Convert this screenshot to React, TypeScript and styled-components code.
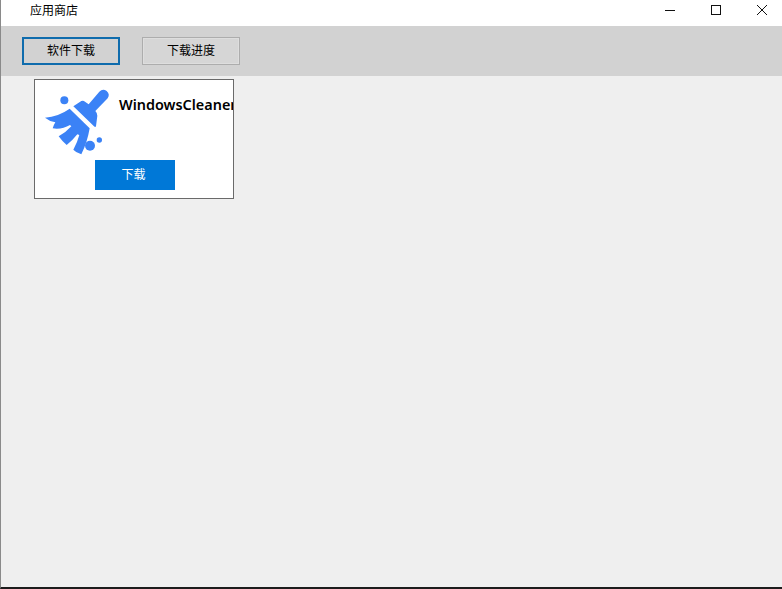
import React from "react";
import styled, { createGlobalStyle } from "styled-components";

const Global = createGlobalStyle`
  html, body { margin: 0; padding: 0; height: 100%; overflow: hidden; }
  #root { height: 100%; }
`;
const Win = styled.div`
  box-sizing: border-box; width: 782px; height: 589px; display: flex; flex-direction: column;
  background: #efefef; border-left: 1px solid #8a8a8a; border-bottom: 2px solid #1c1c1c;
  font-family: "Noto Sans CJK SC", "Noto Sans", sans-serif; color: #000;
`;
const TitleBar = styled.header`
  height: 26px; flex: none; display: flex; align-items: flex-start; background: #fff;
  padding-left: 29px; font-size: 12px;
`;
const Title = styled.span` flex: 1; line-height: 20px; `;
const Controls = styled.div` display: flex; height: 26px; margin-right: -3px; `;
const Ctl = styled.div`
  width: 46px; height: 20px; display: flex; align-items: center; justify-content: center;
  svg { display: block; }
`;
const Toolbar = styled.nav`
  height: 50px; flex: none; background: #d2d2d2; display: flex; gap: 22px;
  padding: 11px 0 0 21px; box-sizing: border-box;
`;
const ToolButton = styled.button<{ $active?: boolean }>`
  width: 98px; height: 28px; padding: 0 0 2px; box-sizing: border-box;
  background: ${(p) => (p.$active ? "#d2d2d2" : "#d6d6d6")};
  border: ${(p) => (p.$active ? "2px solid #0f6cad" : "1px solid #adadad")};
  box-shadow: ${(p) => (p.$active ? "none" : "inset 0 0 0 1px #dedede")};
  font: 12px/16px "Noto Sans CJK SC", sans-serif; color: #000;
`;
const Content = styled.main` flex: 1; padding: 3px 0 0 33px; `;
const Card = styled.article`
  box-sizing: border-box; width: 200px; height: 120px; background: #fff; border: 1px solid #6a6a6a;
  overflow: hidden; display: flex; flex-direction: column;
`;
const CardTop = styled.div` display: flex; height: 80px; flex: none; `;
const Logo = styled.svg` width: 75px; height: 72px; flex: none; margin: 5px 0 0 5px; `;
const Name = styled.h3`
  margin: 13px 0 0 4px; font: 600 14.4px/24px "Noto Sans", sans-serif; white-space: nowrap; color: #000;
`;
const Download = styled.button`
  width: 80px; height: 30px; align-self: center; margin-left: 1px; border: 0; padding: 0 2px 2px 0;
  background: #0078d7; color: #fff; font: 12px/16px "Noto Sans CJK SC", sans-serif;
`;

export default function App() {
  return (
    <Win>
      <Global />
      <TitleBar>
        <Title>应用商店</Title>
        <Controls>
          <Ctl>
            <svg width="12" height="12" viewBox="0 0 12 12"><path d="M1 6.5h10" stroke="#111" strokeWidth="1" /></svg>
          </Ctl>
          <Ctl>
            <svg width="12" height="12" viewBox="0 0 12 12"><rect x="1.5" y="1.5" width="9" height="9" fill="none" stroke="#111" /></svg>
          </Ctl>
          <Ctl>
            <svg width="12" height="12" viewBox="0 0 12 12"><path d="M1 1l10 10M11 1L1 11" stroke="#111" strokeWidth="1" /></svg>
          </Ctl>
        </Controls>
      </TitleBar>
      <Toolbar>
        <ToolButton $active>软件下载</ToolButton>
        <ToolButton>下载进度</ToolButton>
      </Toolbar>
      <Content>
        <Card>
          <CardTop>
            <Logo viewBox="0 0 225 216">
              <g fill="#3b82f6">
                <circle cx="73" cy="46" r="12" />
                <circle cx="150" cy="182" r="15" />
                <circle cx="178" cy="165" r="8" />
                <path d="M100 64 L124 48 Q130 45 135 50 L146 58 L178 20 Q188 10 200 18 Q211 28 203 40 L166 78 Q172 84 172 92 L168 124 Q166 128 162 124 Z" />
                <path d="M15 98 Q55 95 89 71 L149 130 Q142 172 124 208 Q108 203 100 194 Q112 172 118 150 L112 148 Q98 166 80 180 Q66 168 56 154 Q76 144 94 124 L90 120 Q66 134 38 130 Q40 122 46 112 Q30 110 15 98 Z" />
              </g>
            </Logo>
            <Name>WindowsCleaner</Name>
          </CardTop>
          <Download>下载</Download>
        </Card>
      </Content>
    </Win>
  );
}
